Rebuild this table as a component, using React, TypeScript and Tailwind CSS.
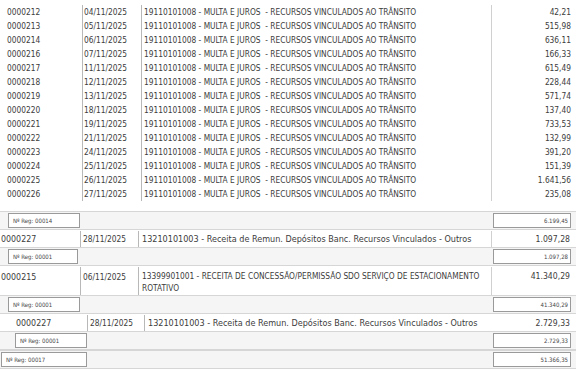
import React from "react";

const F = { fontFamily: "'DejaVu Sans Condensed', 'DejaVu Sans', sans-serif", fontStretch: "condensed" as const };

const mainRows: [string, string, string][] = [
  ["0000212", "04/11/2025", "42,21"],
  ["0000213", "05/11/2025", "515,98"],
  ["0000214", "06/11/2025", "636,11"],
  ["0000216", "07/11/2025", "166,33"],
  ["0000217", "11/11/2025", "615,49"],
  ["0000218", "12/11/2025", "228,44"],
  ["0000219", "13/11/2025", "571,74"],
  ["0000220", "18/11/2025", "137,40"],
  ["0000221", "19/11/2025", "733,53"],
  ["0000222", "21/11/2025", "132,99"],
  ["0000223", "24/11/2025", "391,20"],
  ["0000224", "25/11/2025", "151,39"],
  ["0000225", "26/11/2025", "1.641,56"],
  ["0000226", "27/11/2025", "235,08"],
];

function Summary({ label, total, left, width }: { label: string; total: string; left: string; width: string }) {
  return (
    <div className="flex items-center h-[19px] border-y border-[#d6d6d6] bg-[#f5f5f5]">
      <div className={`${left} ${width} h-[15px] border border-[#9a9a9a] bg-white flex items-center pl-[4px] text-[6px] text-[#444]`}>
        {label}
      </div>
      <div className="flex-1" />
      <div className="w-[78px] mr-[5px] h-[15px] border border-[#9a9a9a] bg-white flex items-center justify-end pr-[2px] text-[6px] text-[#444]">
        {total}
      </div>
    </div>
  );
}

export default function App() {
  return (
    <div className="w-[576px] h-[382px] bg-white text-[#3c3c3c] text-[8.3px] leading-[14px] overflow-hidden" style={F}>
      <div className="pt-[5px]">
        {mainRows.map(([c, d, v]) => (
          <div key={c} className="flex h-[14px]">
            <div className="w-[82px] pl-[7px]">{c}</div>
            <div className="w-[59px] border-l border-[#b8b8b8] pl-[1px]">{d}</div>
            <div className="w-[350px] border-l border-[#b8b8b8] pl-[2px] whitespace-nowrap">
              19110101008 - MULTA E JUROS &nbsp;- RECURSOS VINCULADOS AO TRÂNSITO
            </div>
            <div className="flex-1 border-l border-[#d0d0d0] text-right pr-[5px]">{v}</div>
          </div>
        ))}
      </div>
      <div className="h-[10px]" />
      <Summary label="Nº Reg: 00014" total="6.199,45" left="ml-[8px]" width="w-[72px]" />
      <div className="flex h-[16px] items-center mt-[1px]">
        <div className="w-[80px] pl-[1px] text-[8.8px]">0000227</div>
        <div className="w-[58px] h-full flex items-center border-l border-[#b8b8b8] pl-[2px]">28/11/2025</div>
        <div className="w-[353px] h-full flex items-center border-l border-[#b8b8b8] pl-[3px] whitespace-nowrap text-[9px]">
          13210101003 - Receita de Remun. Depósitos Banc. Recursos Vinculados - Outros
        </div>
        <div className="flex-1 h-full flex items-center justify-end border-l border-[#d0d0d0] pr-[6px] text-[8.6px]">1.097,28</div>
      </div>
      <Summary label="Nº Reg: 00001" total="1.097,28" left="ml-[8px]" width="w-[70px]" />
      <div className="flex h-[28px] mt-[1px]">
        <div className="w-[80px] pl-[1px] pt-[3px] text-[8.8px]">0000215</div>
        <div className="w-[58px] border-l border-[#b8b8b8] pl-[2px] pt-[3px]">06/11/2025</div>
        <div className="w-[353px] border-l border-[#b8b8b8] pl-[3px] pt-[3px] leading-[12px] whitespace-nowrap">
          13399901001 - RECEITA DE CONCESSÃO/PERMISSÃO SDO SERVIÇO DE ESTACIONAMENTO
          <br />
          ROTATIVO
        </div>
        <div className="flex-1 border-l border-[#d0d0d0] text-right pr-[6px] pt-[3px] text-[8.6px] leading-[12px]">41.340,29</div>
      </div>
      <Summary label="Nº Reg: 00001" total="41.340,29" left="ml-[8px]" width="w-[72px]" />
      <div className="flex h-[16px] items-center mt-[1px]">
        <div className="w-[87px] pl-[16px] text-[8.8px]">0000227</div>
        <div className="w-[57px] h-full flex items-center border-l border-[#b8b8b8] pl-[2px]">28/11/2025</div>
        <div className="w-[347px] h-full flex items-center border-l border-[#b8b8b8] pl-[3px] whitespace-nowrap text-[9px]">
          13210101003 - Receita de Remun. Depósitos Banc. Recursos Vinculados - Outros
        </div>
        <div className="flex-1 h-full flex items-center justify-end pr-[6px] text-[8.6px]">2.729,33</div>
      </div>
      <Summary label="Nº Reg: 00001" total="2.729,33" left="ml-[15px]" width="w-[72px]" />
      <Summary label="Nº Reg: 00017" total="51.366,35" left="ml-[1px]" width="w-[86px]" />
    </div>
  );
}
